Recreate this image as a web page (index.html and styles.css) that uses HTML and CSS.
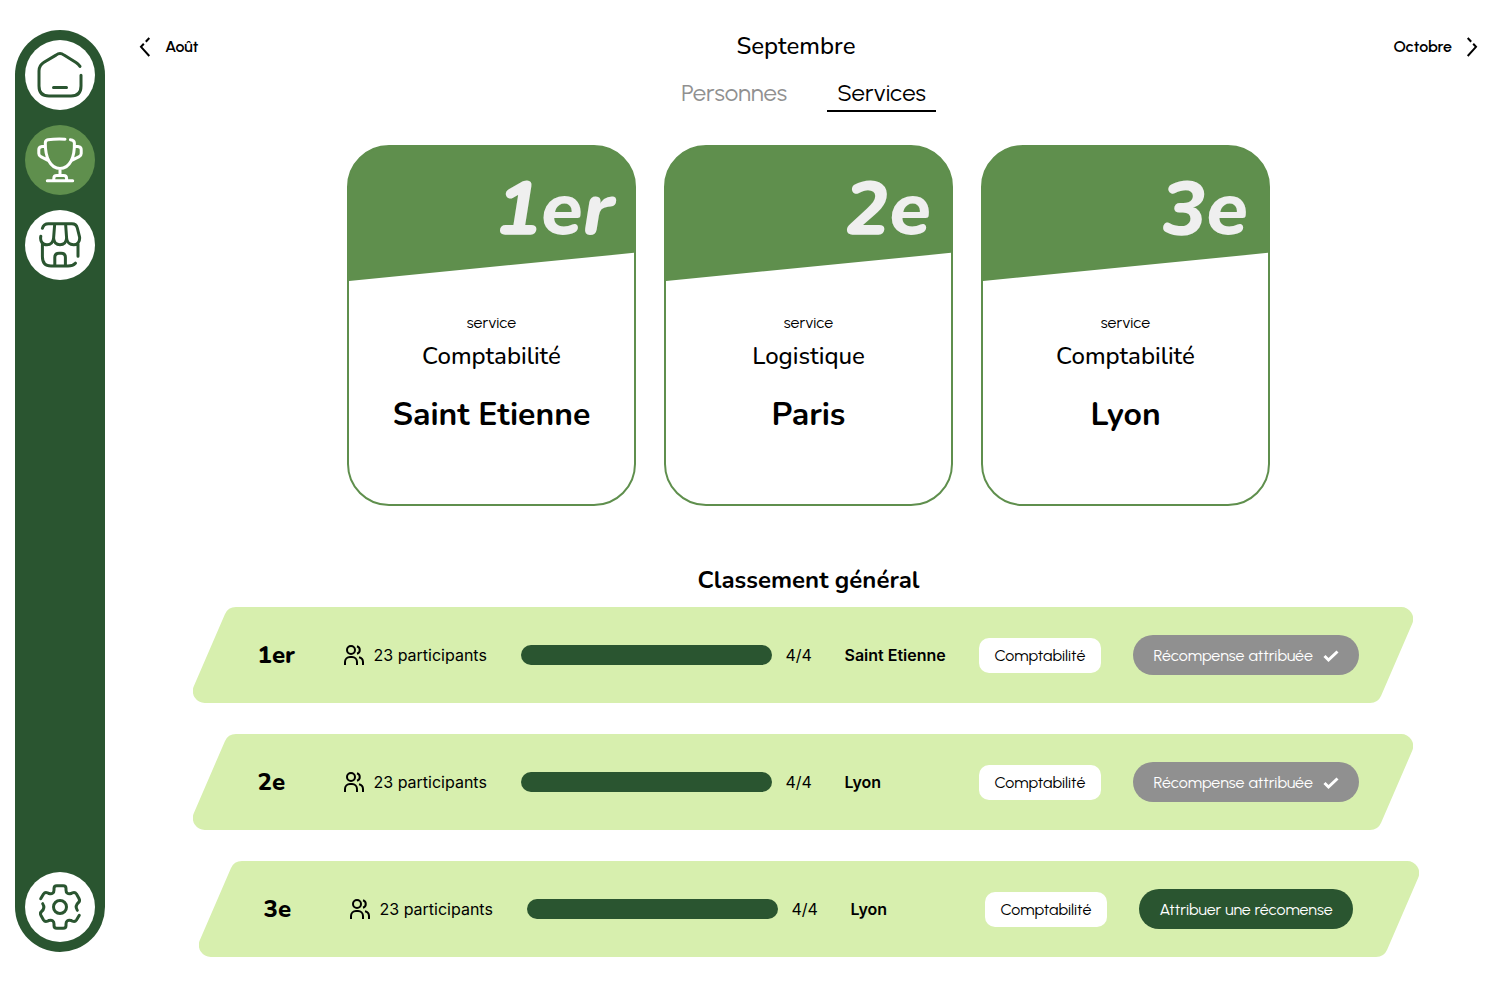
FILE: index.html
```html
<!DOCTYPE html>
<html lang="fr">
<head>
<meta charset="utf-8">
<meta name="viewport" content="width=device-width, initial-scale=1">
<title>Classement des services</title>
<link rel="stylesheet" href="styles.css">
</head>
<body>
<svg class="defs" aria-hidden="true">
  <symbol id="people" viewBox="0 0 24 24">
    <circle cx="9" cy="7" r="4"/>
    <path d="M3 22v-3a5 5 0 0 1 5-5h2a5 5 0 0 1 5 5v3M15 3.2a4 4 0 0 1 0 7.6M17 14.3a5 5 0 0 1 4 4.7v3"/>
  </symbol>
  <symbol id="check" viewBox="0 0 16 14"><path d="M1.5 7l4 4L14.5 2.5"/></symbol>
  <symbol id="slab" viewBox="0 0 1220 96" preserveAspectRatio="none">
    <path d="M42.9 0H1208.2A12 12 0 0 1 1219.2 16.8L1188.1 88.8A12 12 0 0 1 1177.1 96H11.8A12 12 0 0 1 .8 79.2L31.9 7.2A12 12 0 0 1 42.9 0Z"/>
  </symbol>
</svg>
<div class="app">
  <nav class="sidebar" aria-label="Navigation principale">
    <a class="nav-link" href="#accueil" aria-label="Accueil">
      <svg class="nav-icon" viewBox="0 0 70 70"><path d="M55 26.4C54 24.8 52.5 23.6 51 22.6L39 15.1Q35 12 31 15.1L19 22.3Q14 25.3 14 31V46Q14 56 24 56H46Q56 56 56 46V35.2M28.5 47.4H41.5"/></svg>
    </a>
    <a class="nav-link nav-link--active" href="#classement" aria-label="Classement" aria-current="page">
      <svg class="nav-icon" viewBox="0 0 70 70"><path d="M40 14.2C33 13.9 27 14.2 23 14.8Q20.4 15.2 20.3 18C20.2 32 25 43.5 35 43.5C45 43.5 49.8 32 49.4 18Q49.2 15 45.4 14.7M20.3 20.8L16.2 21.8Q13.8 22.4 13.8 24.8V28.5Q13.8 30.6 15.8 31.6L22.6 35.2M49.4 20.8L53.8 21.8Q56.2 22.4 56.2 24.8V28.5Q56.2 30.6 54.2 31.6L47.2 35.2M35 43.5V50.5M28.8 55V53.5Q28.8 50.6 31.8 50.6H38.5Q41.6 50.6 41.6 53.5V55M22.3 55.8H47.7"/></svg>
    </a>
    <a class="nav-link" href="#boutique" aria-label="Boutique">
      <svg class="nav-icon" viewBox="0 0 70 70"><path d="M17.4 18.3Q18.6 13.8 23.5 13.8H46.8Q51.3 13.8 52.3 18L54.6 27.2C55 31.5 52.6 34.8 48.6 34.8C44.8 34.8 41.8 32 41.6 28.2C41.4 32 39 34.8 35 34.8C31.2 34.8 28.8 32 28.6 28.2C28.2 32 25.8 34.8 22 34.8C17.6 34.8 14.8 31.5 15.8 26.2M29.7 14L28.6 28.2M40.6 14L41.6 28.2M17.4 34.5V46.5Q17.4 56 26 56H43Q48 56 50.4 53.2M53 34V46.2M29.8 55.8V47.5Q29.8 43.2 34 43.2H36.2Q40.4 43.2 40.4 47.5V55.8"/></svg>
    </a>
    <a class="nav-link nav-link--bottom" href="#parametres" aria-label="Paramètres">
      <svg class="nav-icon" viewBox="0 0 70 70">
        <circle cx="35" cy="35" r="6.5"/>
        <path id="teeth" d="M15.7 26.7L18.5 22Q20 19.8 22.5 20.8L24 21.6Q29 22.5 29 18V16.5Q29 13.7 31.8 13.7H38.2Q41 13.7 41 16.5V18Q41 22.5 46 21.6L47.5 20.8Q50 19.8 51.5 22L54 26.5Q55.3 29 53.5 30.5Q49.5 34 52.3 38.3"/>
        <use href="#teeth" transform="rotate(180 35 35)"/>
      </svg>
    </a>
  </nav>

  <main class="main">
    <header class="months">
      <a class="month-link" href="#aout">
        <svg class="chevron" viewBox="0 0 12 20"><path d="M10.3 1L6.8 4.8M4.8 6.8L2 9.8L10.3 19"/></svg>
        Août
      </a>
      <h1 class="month-title">Septembre</h1>
      <a class="month-link" href="#octobre">
        Octobre
        <svg class="chevron" viewBox="0 0 12 20"><path d="M1.7 1L5.2 4.8M7.2 6.8L10 9.8L1.7 19"/></svg>
      </a>
    </header>

    <div class="tabs" role="tablist">
      <button class="tab" type="button" role="tab" aria-selected="false">Personnes</button>
      <button class="tab tab--active" type="button" role="tab" aria-selected="true">Services</button>
    </div>

    <section class="podium" aria-label="Podium">
      <article class="card">
        <div class="card-rank">1er</div>
        <p class="card-label">service</p>
        <p class="card-service">Comptabilité</p>
        <h2 class="card-city">Saint Etienne</h2>
      </article>
      <article class="card">
        <div class="card-rank">2e</div>
        <p class="card-label">service</p>
        <p class="card-service">Logistique</p>
        <h2 class="card-city">Paris</h2>
      </article>
      <article class="card">
        <div class="card-rank">3e</div>
        <p class="card-label">service</p>
        <p class="card-service">Comptabilité</p>
        <h2 class="card-city">Lyon</h2>
      </article>
    </section>

    <section class="ranking">
      <h2 class="ranking-title">Classement général</h2>
      <ol class="rows">
        <li class="row row--done">
          <svg class="row-shape" preserveAspectRatio="none" aria-hidden="true"><use href="#slab"/></svg>
          <span class="row-rank">1er</span>
          <span class="people"><svg class="people-icon"><use href="#people"/></svg>23 participants</span>
          <label class="score"><progress class="bar" value="4" max="4"></progress>4/4</label>
          <strong class="row-city">Saint Etienne</strong>
          <span class="badge">Comptabilité</span>
          <button class="reward reward--done" type="button">Récompense attribuée<svg class="check"><use href="#check"/></svg></button>
        </li>
        <li class="row row--done">
          <svg class="row-shape" preserveAspectRatio="none" aria-hidden="true"><use href="#slab"/></svg>
          <span class="row-rank">2e</span>
          <span class="people"><svg class="people-icon"><use href="#people"/></svg>23 participants</span>
          <label class="score"><progress class="bar" value="4" max="4"></progress>4/4</label>
          <strong class="row-city">Lyon</strong>
          <span class="badge">Comptabilité</span>
          <button class="reward reward--done" type="button">Récompense attribuée<svg class="check"><use href="#check"/></svg></button>
        </li>
        <li class="row">
          <svg class="row-shape" preserveAspectRatio="none" aria-hidden="true"><use href="#slab"/></svg>
          <span class="row-rank">3e</span>
          <span class="people"><svg class="people-icon"><use href="#people"/></svg>23 participants</span>
          <label class="score"><progress class="bar" value="4" max="4"></progress>4/4</label>
          <strong class="row-city">Lyon</strong>
          <span class="badge">Comptabilité</span>
          <button class="reward" type="button">Attribuer une récomense</button>
        </li>
      </ol>
    </section>
  </main>
</div>
</body>
</html>
```
FILE: styles.css
```css
:root {
  --dark: #2a5530;
  --green: #5f8f4d;
  --light: #d7efae;
  --gray: #909090;
  --title: Nunito, "Open Sans", sans-serif;
  --text: Urbanist, Lato, sans-serif;
  --data: Inter, sans-serif;
}

* { box-sizing: border-box; }

body {
  margin: 0;
  background: #fff;
  color: #000;
  font: 400 16px/20px var(--text);
}

h1, h2, p, ol { margin: 0; padding: 0; }

a { color: inherit; text-decoration: none; }

button {
  border: 0;
  background: none;
  color: inherit;
  font: inherit;
  cursor: pointer;
}

.defs { position: absolute; width: 0; height: 0; }

.app { display: flex; min-height: 100vh; }

/* Sidebar */
.sidebar {
  display: flex;
  flex: none;
  flex-direction: column;
  gap: 15px;
  margin: 30px 0 30px 15px;
  padding: 10px;
  border-radius: 45px;
  background: var(--dark);
}

.nav-link {
  width: 70px;
  height: 70px;
  border-radius: 50%;
  background: #fff;
  color: var(--dark);
}

.nav-link--active { background: var(--green); color: #fff; }
.nav-link--bottom { margin-top: auto; }

.nav-icon {
  display: block;
  width: 70px;
  height: 70px;
  fill: none;
  stroke: currentColor;
  stroke-width: 3;
  stroke-linecap: round;
  stroke-linejoin: round;
}

/* Header */
.main { flex: 1; min-width: 0; }

.months {
  display: flex;
  align-items: center;
  justify-content: space-between;
  padding: 30px 34px 0;
}

.month-link {
  display: flex;
  align-items: center;
  gap: 14px;
  padding-top: 1px;
  font-weight: 600;
  line-height: 21px;
}

.chevron {
  width: 12px;
  height: 20px;
  fill: none;
  stroke: currentColor;
  stroke-width: 2;
}

.month-title { font: 500 24px/32px var(--title); }

.tabs {
  display: flex;
  justify-content: center;
  gap: 30px;
  margin: 12px 10px 0 0;
}

.tab {
  padding: 3px 10px 2px;
  border-bottom: 2px solid transparent;
  color: var(--gray);
  font-size: 24px;
  line-height: 31px;
}

.tab--active { border-color: #000; color: #000; }

/* Podium */
.podium {
  display: flex;
  justify-content: center;
  gap: 28px;
  margin-top: 33px;
}

.card {
  width: 289px;
  min-height: 361px;
  overflow: hidden;
  border: 2px solid var(--green);
  border-radius: 42px;
  background: linear-gradient(var(--green), var(--green)) top / 100% 80px no-repeat border-box;
  text-align: center;
}

.card-rank {
  height: 134px;
  padding: 10px 20px 0;
  background: var(--green);
  clip-path: polygon(0 0, 100% 0, 100% 79%, 0 100%);
  color: #efefef;
  font: italic 800 76px/104px var(--title);
  text-align: right;
}

.card-label { margin-top: 32px; }
.card-service { margin-top: 7px; font: 500 24px/32px var(--title); }
.card-city { margin-top: 21px; font: 700 32px/44px var(--title); }

/* Ranking */
.ranking { margin-top: 58px; padding-bottom: 25px; }

.ranking-title {
  font: 700 24px/32px var(--title);
  text-align: center;
}

.rows {
  display: flex;
  flex-direction: column;
  align-items: center;
  gap: 31px;
  margin-top: 11px;
  list-style: none;
}

.row {
  position: relative;
  display: flex;
  align-items: center;
  gap: 32px;
  width: 100%;
  max-width: 1220px;
  min-height: 96px;
  padding: 0 52px 0 65px;
  font-family: var(--data);
}

.row--done { margin-right: 12px; }

.row-shape {
  position: absolute;
  z-index: -1;
  inset: 0;
  width: 100%;
  height: 100%;
  fill: var(--light);
}

.row-rank { width: 52px; font: 800 24px/32px var(--title); }

.people {
  display: flex;
  align-items: center;
  gap: 8px;
  width: 147px;
  white-space: nowrap;
}

.people-icon {
  flex: none;
  width: 24px;
  height: 24px;
  fill: none;
  stroke: #000;
  stroke-width: 2;
}

.score {
  display: flex;
  align-items: center;
  gap: 14px;
  width: 292px;
}

.bar {
  appearance: none;
  width: 251px;
  height: 20px;
  overflow: hidden;
  border: 0;
  border-radius: 10px;
  background: #d9d9d9;
}

.bar::-webkit-progress-bar { background: #d9d9d9; }
.bar::-webkit-progress-value { background: var(--dark); }
.bar::-moz-progress-bar { background: var(--dark); }

.row-city { width: 102px; font-weight: 600; white-space: nowrap; }

.badge {
  padding: 8px 16px 7px;
  border-radius: 10px;
  background: #fff;
  font-family: var(--text);
  text-align: center;
}

.reward {
  display: flex;
  align-items: center;
  gap: 10px;
  height: 40px;
  padding: 1px 20px 0;
  border-radius: 20px;
  background: var(--dark);
  color: #fff;
  font-family: var(--text);
  white-space: nowrap;
}

.reward--done { background: var(--gray); }

.check {
  width: 16px;
  height: 14px;
  fill: none;
  stroke: #fff;
  stroke-width: 3;
}
```
